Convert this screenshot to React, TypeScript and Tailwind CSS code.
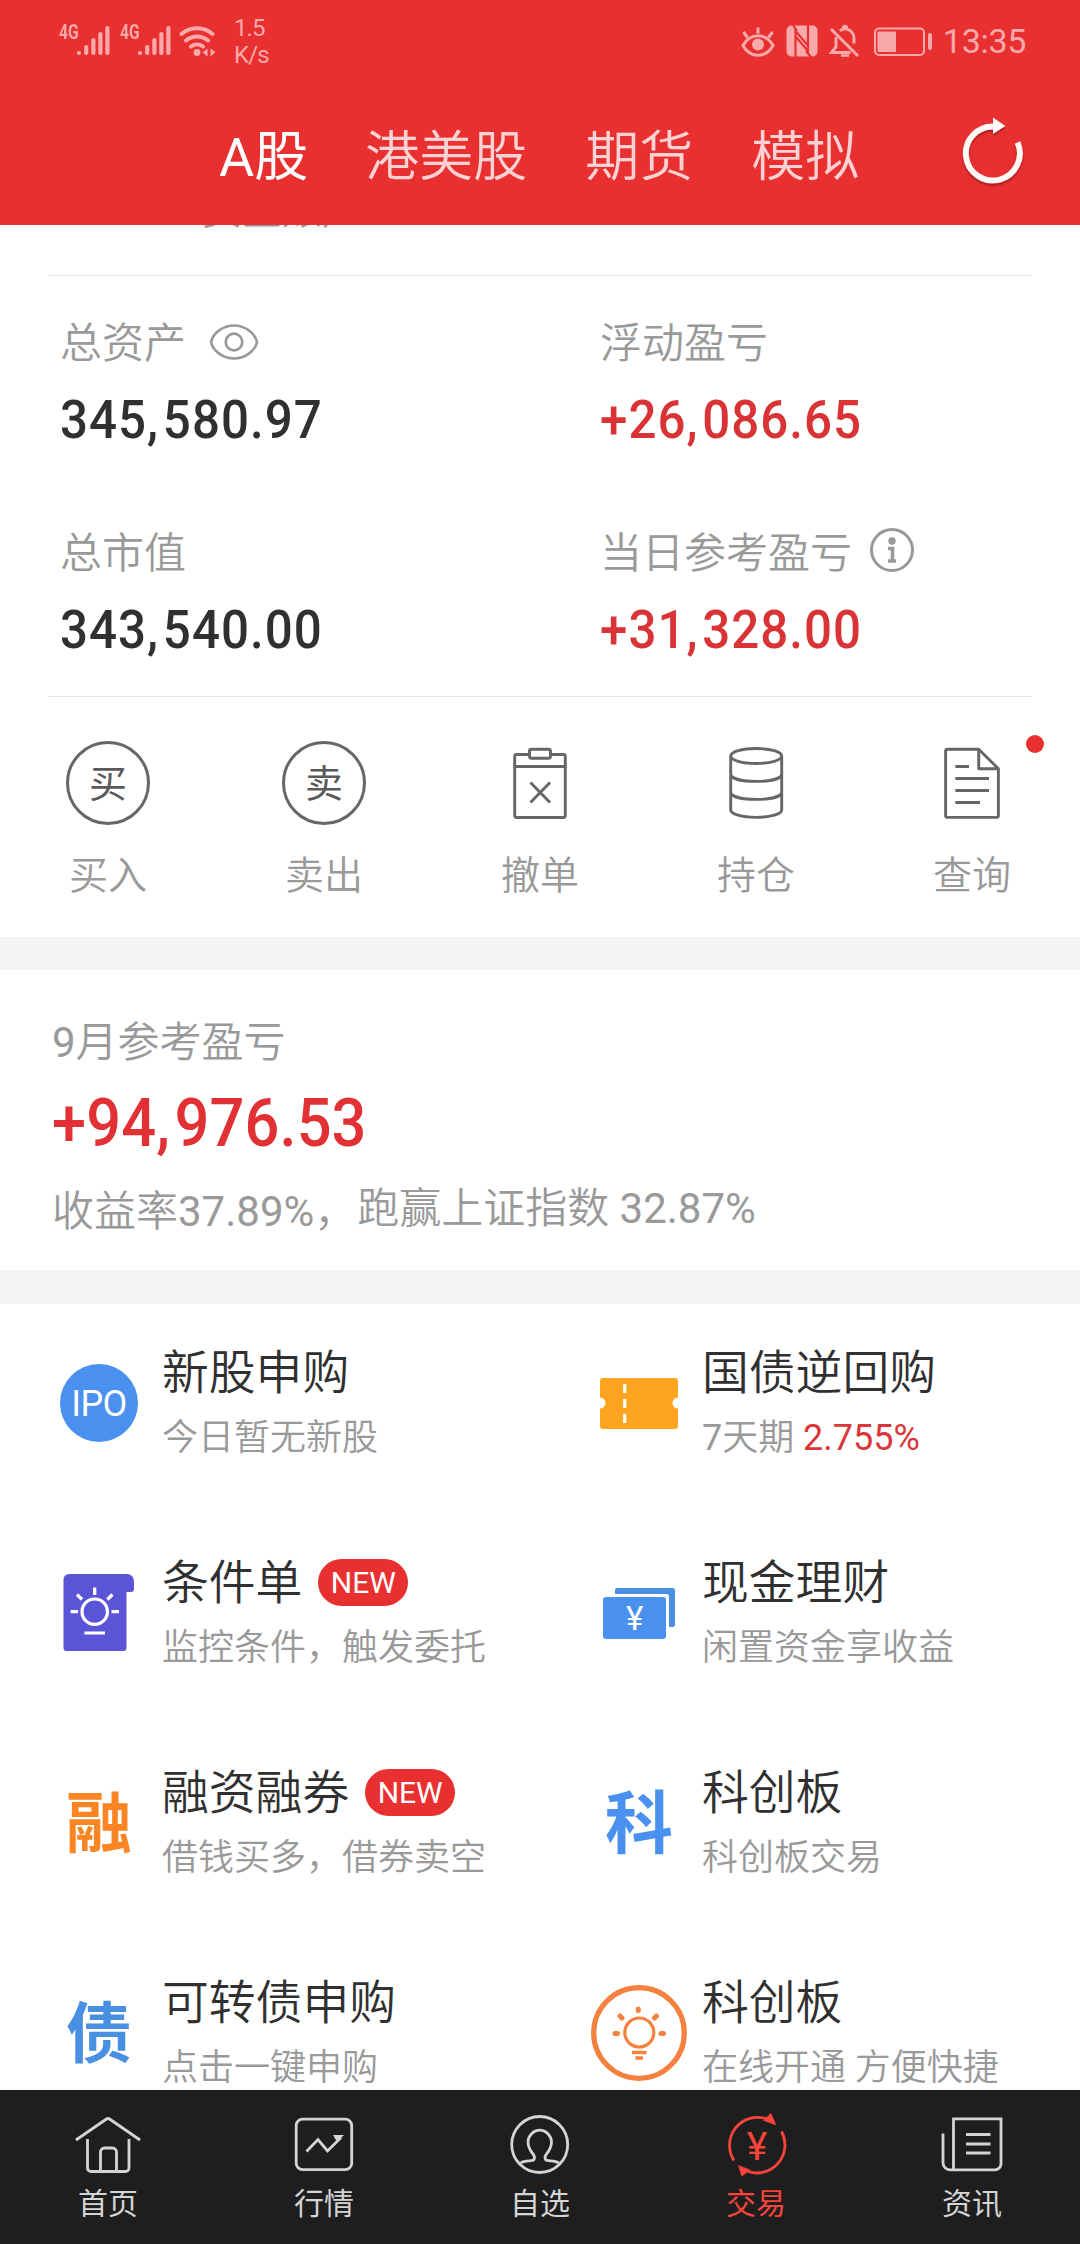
import React from "react";

interface Service {
  title: string;
  desc: React.ReactNode;
  icon: React.ReactNode;
  isNew?: boolean;
}

function StatusBar() {
  return (
    <div className="flex h-[84px] items-start justify-between pl-[59px] pr-[54px] font-normal text-[#f9a9a9]">
      <div className="flex">
        {[0, 1].map(i => (
          <div key={i} className="flex w-[61px] pt-6">
            <span className="w-[18px] origin-top-left scale-x-[0.78] text-[20px] font-bold leading-[17px]">4G</span>
            <svg width="34" height="34" viewBox="0 0 34 34" stroke="currentColor" strokeWidth="4.2" strokeLinecap="round">
              <path d="M2 29v0M9.2 23v6M16.4 16v13M23.4 10v19M30.4 4v25" />
            </svg>
          </div>
        ))}
        <svg className="mt-[23px] -ml-[2px]" width="38" height="34" viewBox="0 0 38 34" fill="none" stroke="currentColor" strokeWidth="4" strokeLinecap="round">
          <path d="M2.5 11a24 24 0 0 1 31 0M7 17.5a17 17 0 0 1 22 0M12 23.5a10 10 0 0 1 12 0" />
          <circle cx="18" cy="29.5" r="3.4" fill="currentColor" stroke="none" />
          <path d="M28.5 25.5v8l-5-4zM31.5 25.5v8l5-4.5z" fill="currentColor" stroke="none" />
        </svg>
        <div className="ml-[17px] pt-[15px] text-[24px] leading-[27px] tracking-[-0.9px]">
          <p>1.5</p>
          <p>K/s</p>
        </div>
      </div>
      <div className="flex items-center pt-[22px]">
        <svg width="34" height="36" viewBox="0 0 34 36" fill="none" stroke="currentColor" strokeWidth="3">
          <path d="M2 22.5C9 9.500 25 9.500 32 22.500C25 35.500 9 35.500 2 22.500z" />
          <circle cx="17" cy="21.5" r="6" fill="currentColor" stroke="none" />
          <path d="M17 4.500v6M2.500 9l4 5.500M31.500 9l-4 5.500" />
        </svg>
        <svg className="ml-[11px]" width="32" height="36" viewBox="0 0 32 36">
          <rect x="0.5" y="2.5" width="31" height="31" rx="5" fill="currentColor" />
          <path d="M9.5 34V8l12 14M22 2v26L10 14M7 2l4 6M20 28l5 6" fill="none" stroke="#e93031" strokeWidth="2.2" />
        </svg>
        <svg className="ml-[11px]" width="32" height="36" viewBox="0 0 32 36" fill="none" stroke="currentColor" strokeWidth="3">
          <path d="M2 6l27 27" />
          <path d="M7 14v10l-4.500 5.500h19M11 8c1-1 2-1.500 3.500-2v-2a2 2 0 0 1 3 0v2c4.500 1 7.500 5 7.500 9.500v5" />
          <path d="M12 32.500h8" strokeWidth="2.500" />
        </svg>
        <svg className="ml-[13px]" width="60" height="36" viewBox="0 0 60 36">
          <rect x="1" y="5.500" width="49" height="26.500" rx="4" fill="none" stroke="currentColor" strokeWidth="2" />
          <rect x="3.500" y="8.500" width="18.500" height="20.500" rx="1" fill="currentColor" />
          <rect x="54" y="10" width="4" height="17" rx="2" fill="currentColor" />
        </svg>
        <span className="ml-[9px] pt-[1px] text-[34px] leading-9 tracking-[-0.3px]">13:35</span>
      </div>
    </div>
  );
}

function Header() {
  return (
    <header className="h-[225px] bg-[#e93031]">
      <StatusBar />
      <nav className="flex h-[141px] items-start pl-[219px] pr-[54px] text-[54px] leading-[70px] text-[#fbd2d4]">
        <span className="mt-[39px] font-normal text-white">A股</span>
        <span className="ml-[57px] mt-[39px]">港美股</span>
        <span className="ml-[58px] mt-[39px]">期货</span>
        <span className="ml-[58px] mt-[39px]">模拟</span>
        <svg className="ml-auto mt-[32px] drop-shadow-[0_2px_1px_rgba(90,0,0,0.45)]" width="64" height="70" viewBox="0 0 64 70" fill="none">
          <path d="M55.500 26.500A27 27 0 1 1 32 10.500" stroke="#fff8f4" strokeWidth="6" />
          <path d="M31 1.500l12.500 8.500L31 18z" fill="#fff8f4" />
        </svg>
      </nav>
    </header>
  );
}

// Digits are set slightly narrow, with extra room after the thousands separator
function Amount({ value }: { value: string }) {
  const [head, tail] = value.split(",");
  return (
    <span className="inline-block origin-left scale-x-[0.93]">
      {head}
      <span className="pr-[0.075em]">,</span>
      {tail}
    </span>
  );
}

function Stat({ label, value, up, icon }: { label: string; value: string; up?: boolean; icon?: React.ReactNode }) {
  return (
    <div className="pl-[60px]">
      <div className="flex h-[60px] items-center text-[42px] leading-[60px] text-[#999]">
        <span className="pt-[3px]">{label}</span>
        {icon}
      </div>
      <p className={`mt-[18px] text-[53px] font-medium leading-[60px] tracking-[1.1px] ${up ? "text-[#d93336]" : "text-[#303030]"}`}>
        <Amount value={value} />
      </p>
    </div>
  );
}

function Assets() {
  return (
    <section className="grid h-[420px] grid-cols-2 content-start gap-y-[72px] pt-9">
      <Stat
        label="总资产"
        value="345,580.97"
        icon={
          <svg className="ml-[23px]" width="50" height="38" viewBox="0 0 50 38" fill="none" stroke="#999" strokeWidth="2.7">
            <path d="M2 19C4 10 14 2.500 25 2.500S46 10 48 19C46 28 36 35.500 25 35.500S4 28 2 19z" />
            <circle cx="25" cy="19" r="8.300" />
          </svg>
        }
      />
      <Stat label="浮动盈亏" value="+26,086.65" up />
      <Stat label="总市值" value="343,540.00" />
      <Stat
        label="当日参考盈亏"
        value="+31,328.00"
        up
        icon={
          <svg className="-mt-1 ml-[17px]" width="46" height="46" viewBox="0 0 46 46" fill="none" stroke="#999">
            <circle cx="23" cy="23" r="20.500" strokeWidth="3" />
            <circle cx="23" cy="14" r="3.700" fill="#999" stroke="none" />
            <path d="M19 21.500h4.500v12M19 34h8" strokeWidth="3.600" />
          </svg>
        }
      />
    </section>
  );
}

const line = { fill: "none", stroke: "#666", strokeWidth: 2.9, strokeLinejoin: "round" as const };

const actions = [
  {
    label: "买入",
    icon: <span className="flex size-[84px] items-center justify-center rounded-full border-3 border-[#666] pt-[2px] text-[38px] font-normal leading-none text-[#5a5a5a]">买</span>,
  },
  {
    label: "卖出",
    icon: <span className="flex size-[84px] items-center justify-center rounded-full border-3 border-[#666] pt-[2px] text-[38px] font-normal leading-none text-[#5a5a5a]">卖</span>,
  },
  {
    label: "撤单",
    icon: (
      <svg width="84" height="84" viewBox="0 0 84 84" {...line}>
        <path d="M31.500 13.500H18.700a2 2 0 0 0-2 2v59a2 2 0 0 0 2 2h46.600a2 2 0 0 0 2-2v-59a2 2 0 0 0-2-2H52.500M16.700 25.500h50.600" />
        <rect x="31.500" y="8.300" width="21" height="9" rx="2" />
        <path d="M32.500 41.500l19.500 20M52 41.500l-19.500 20" />
      </svg>
    ),
  },
  {
    label: "持仓",
    icon: (
      <svg width="84" height="84" viewBox="0 0 84 84" {...line}>
        <ellipse cx="42.200" cy="15" rx="25.500" ry="7.500" />
        <path d="M16.700 15v54c0 4 11 7.400 25.500 7.400S67.700 73 67.700 69V15M16.700 34c2 4 12 6.400 25.500 6.400S65.700 38 67.700 34M16.700 52c2 4 12 6.400 25.500 6.400S65.700 56 67.700 52" />
      </svg>
    ),
  },
  {
    label: "查询",
    icon: (
      <svg width="84" height="84" viewBox="0 0 84 84" {...line}>
        <path d="M48.700 8.200H17.600a2 2 0 0 0-2 2v64.200a2 2 0 0 0 2 2h48.800a2 2 0 0 0 2-2V27.700zv19.500h19.700M25.300 25.500H39M25.300 37.500h33.700M25.300 49.500h33.700M25.300 61.500H50" />
      </svg>
    ),
    dot: true,
  },
];

function Actions() {
  return (
    <section className="grid h-[240px] grid-cols-5 pt-11">
      {actions.map(a => (
        <div key={a.label} className="relative flex flex-col items-center">
          {a.icon}
          <span className="mt-[26px] text-[39px] leading-[50px] text-[#999]">{a.label}</span>
          {a.dot && <i className="absolute -top-[6px] right-[36px] size-[18px] rounded-full bg-[#e93031]" />}
        </div>
      ))}
    </section>
  );
}

function MonthProfit() {
  return (
    <section className="h-[300px] pl-[52px] pt-[43px] text-[42px] text-[#999]">
      <p className="leading-[60px]">
        <span className="font-normal">9</span>月参考盈亏
      </p>
      <p className="mt-4 text-[66px] font-medium leading-[70px] tracking-[0.1px] text-[#e13134]">
        <Amount value="+94,976.53" />
      </p>
      <div className="mt-5 flex leading-[60px]">
        <span className="pt-[3px]">
          收益率<span className="font-normal">37.89%</span>，
        </span>
        <span className="ml-px">
          跑赢上证指数 <span className="font-normal">32.87%</span>
        </span>
      </div>
    </section>
  );
}

const services: Service[] = [
  {
    title: "新股申购",
    desc: "今日暂无新股",
    icon: (
      <span className="flex size-[78px] items-center justify-center rounded-full bg-[#4a90ee] pt-[2px] text-[36px] font-normal leading-none tracking-[-0.6px] text-white">
        IPO
      </span>
    ),
  },
  {
    title: "国债逆回购",
    desc: (
      <>
        <span className="font-normal">7</span>天期 <span className="font-normal text-[#d9363a]">2.755%</span>
      </>
    ),
    icon: (
      <svg width="96" height="96" viewBox="0 0 96 96">
        <path d="M12 23h72a3 3 0 0 1 3 3v16.500a5.500 5.500 0 0 0 0 11V71a3 3 0 0 1-3 3H12a3 3 0 0 1-3-3V53.500a5.500 5.500 0 0 0 0-11V26a3 3 0 0 1 3-3z" fill="#ffa41f" />
        <path d="M33.700 29v9M33.700 44v9M33.700 59v9" stroke="#fff" strokeWidth="3.200" />
      </svg>
    ),
  },
  {
    title: "条件单",
    desc: "监控条件，触发委托",
    isNew: true,
    icon: (
      <svg width="96" height="96" viewBox="0 0 96 96">
        <path d="M18 9h58a7 7 0 0 1 7 7v8a3 3 0 0 1-3 3h-4.500v56a3 3 0 0 1-3 3H15.500a3 3 0 0 1-3-3V14.500A5.500 5.500 0 0 1 18 9z" fill="#5a55d6" />
        <g fill="none" stroke="#fff" strokeWidth="3.200">
          <circle cx="43.700" cy="46.700" r="12.700" />
          <path d="M43.700 22.500V30M19.600 46.700h7.500M60.500 46.700h7.500M26 29.500l5 5M61.400 29.500l-5 5M33.400 68h20.600" />
        </g>
      </svg>
    ),
  },
  {
    title: "现金理财",
    desc: "闲置资金享收益",
    icon: (
      <svg width="96" height="96" viewBox="0 0 96 96">
        <path d="M26 23h55.500a2.500 2.500 0 0 1 2.500 2.500v34a2.500 2.500 0 0 1-2.500 2.500H78V31.500a2.500 2.500 0 0 0-2.500-2.500H24v-4a2 2 0 0 1 2-2z" fill="#4a90e2" />
        <rect x="12" y="32" width="63" height="42" rx="3" fill="#4a90ee" />
        <text x="43.700" y="65" textAnchor="middle" fontSize="33" fontWeight="400" fill="#fff">¥</text>
      </svg>
    ),
  },
  {
    title: "融资融券",
    desc: "借钱买多，借券卖空",
    isNew: true,
    icon: <span className="pt-[4px] text-[66px] font-bold leading-none text-[#fb8423]">融</span>,
  },
  {
    title: "科创板",
    desc: "科创板交易",
    icon: <span className="pt-[4px] text-[68px] font-bold leading-none text-[#4a90ee]">科</span>,
  },
  {
    title: "可转债申购",
    desc: "点击一键申购",
    icon: <span className="pt-[3px] text-[66px] font-bold leading-none text-[#4a90e2]">债</span>,
  },
  {
    title: "科创板",
    desc: "在线开通 方便快捷",
    icon: (
      <svg width="96" height="96" viewBox="0 0 96 96" fill="none" stroke="#f5813f">
        <circle cx="48" cy="48" r="45.300" strokeWidth="5.200" />
        <circle cx="48.300" cy="47.500" r="14.500" strokeWidth="3.200" />
        <path d="M47.300 24v1.500M29 31l2 2M65.500 31l-2 2M24 48.500h2.500M70 48.500h2.500" strokeWidth="5" strokeLinecap="round" />
        <path d="M41 67.500h14.500M44.500 73h7.500" strokeWidth="3.400" />
      </svg>
    ),
  },
];

function Services() {
  return (
    <section className="grid h-[786px] grid-cols-2 content-start gap-y-[90px] overflow-hidden pt-[38px]">
      {services.map((s, idx) => (
        <div key={idx} className="flex h-[120px] pl-[51px]">
          <div className="flex h-[122px] w-24 shrink-0 items-center justify-center">{s.icon}</div>
          <div className="ml-[15px] mt-px">
            <div className="flex h-[60px] items-center text-[46.8px] leading-[60px] text-[#303030]">
              <span>{s.title}</span>
              {s.isNew && (
                <span className="-mt-[2px] ml-4 flex h-[47px] w-[90px] items-center justify-center rounded-full bg-[#e93031] pt-[2px] text-[30px] font-normal leading-none text-white">
                  NEW
                </span>
              )}
            </div>
            <p className="mt-[10px] text-[36px] leading-[50px] text-[#999]">{s.desc}</p>
          </div>
        </div>
      ))}
    </section>
  );
}

const tabs = [
  {
    label: "首页",
    icon: (
      <>
        <path d="M4 31L34.500 10q1.500-1 3 0L68 31" />
        <path d="M15.500 30v29a3.500 3.500 0 0 0 3.500 3.500h34.500a3.500 3.500 0 0 0 3.500-3.500V30M28.500 62V43a4 4 0 0 1 4-4h8a4 4 0 0 1 4 4v19" />
      </>
    ),
  },
  {
    label: "行情",
    icon: (
      <>
        <rect x="8.200" y="10.200" width="55.500" height="50.500" rx="6.500" />
        <path d="M18.500 42.500L30 30.500l9.500 11.500L53 28.500" />
        <path d="M45 26h11l-7 7z" fill="currentColor" stroke="none" />
      </>
    ),
  },
  {
    label: "自选",
    icon: (
      <>
        <circle cx="35.700" cy="35.500" r="28" />
        <path d="M16.500 54C19 52 23 52 27 51.700C31 51.500 31.500 48 29 45C26 41.500 24 38 24 32.500A11.800 12.500 0 0 1 47.500 32.500C47.500 38 45.500 41.500 42.500 45C40 48 40.500 51.500 44.500 51.700C48.500 52 52.500 52 55 54" />
      </>
    ),
  },
  {
    label: "交易",
    active: true,
    icon: (
      <>
        <path d="M14 51.500A28 28 0 0 1 47 10M61.500 22.500A28 28 0 0 1 28 62.500" />
        <path d="M51 4l5.500 12.500L43 11.500zM18 56l3.500 11.500L31 61z" fill="currentColor" stroke="none" />
        <text x="37" y="51" textAnchor="middle" fontSize="39" fontWeight="400" fill="currentColor" stroke="none">¥</text>
      </>
    ),
  },
  {
    label: "资讯",
    icon: (
      <path d="M17.500 61V9.800H65v45a6 6 0 0 1-6 6H14a7 7 0 0 1-7-7V24.500M30 25.500h24.500M30 35h24.500M30 44h24.500" />
    ),
  },
];

function TabBar() {
  return (
    <nav className="grid h-[154px] grid-cols-5 bg-[#1e1e1e] pt-[19px]">
      {tabs.map(t => (
        <div key={t.label} className={`flex flex-col items-center ${t.active ? "text-[#f8443a]" : "text-[#d4d4d4]"}`}>
          <svg width="72" height="72" viewBox="0 0 72 72" fill="none" stroke="currentColor" strokeWidth="2.8">
            {t.icon}
          </svg>
          <span className="mt-[3px] text-[30px] font-normal leading-10">{t.label}</span>
        </div>
      ))}
    </nav>
  );
}

export default function App() {
  return (
    <div className="h-[2244px] w-[1080px] overflow-hidden bg-white font-[Roboto,'Noto_Sans_CJK_SC',sans-serif] font-[350]">
      <Header />
      <div className="h-[50px] overflow-hidden pl-[202px]">
        <p className="-mt-[44px] text-[40px] leading-[60px] text-[#999]">资金账户</p>
      </div>
      <hr className="mx-12 border-[#e8e8e8]" />
      <Assets />
      <hr className="mx-12 border-[#e8e8e8]" />
      <Actions />
      <div className="h-[33px] bg-[#f4f4f4]" />
      <MonthProfit />
      <div className="h-[34px] bg-[#f4f4f4]" />
      <Services />
      <TabBar />
    </div>
  );
}
